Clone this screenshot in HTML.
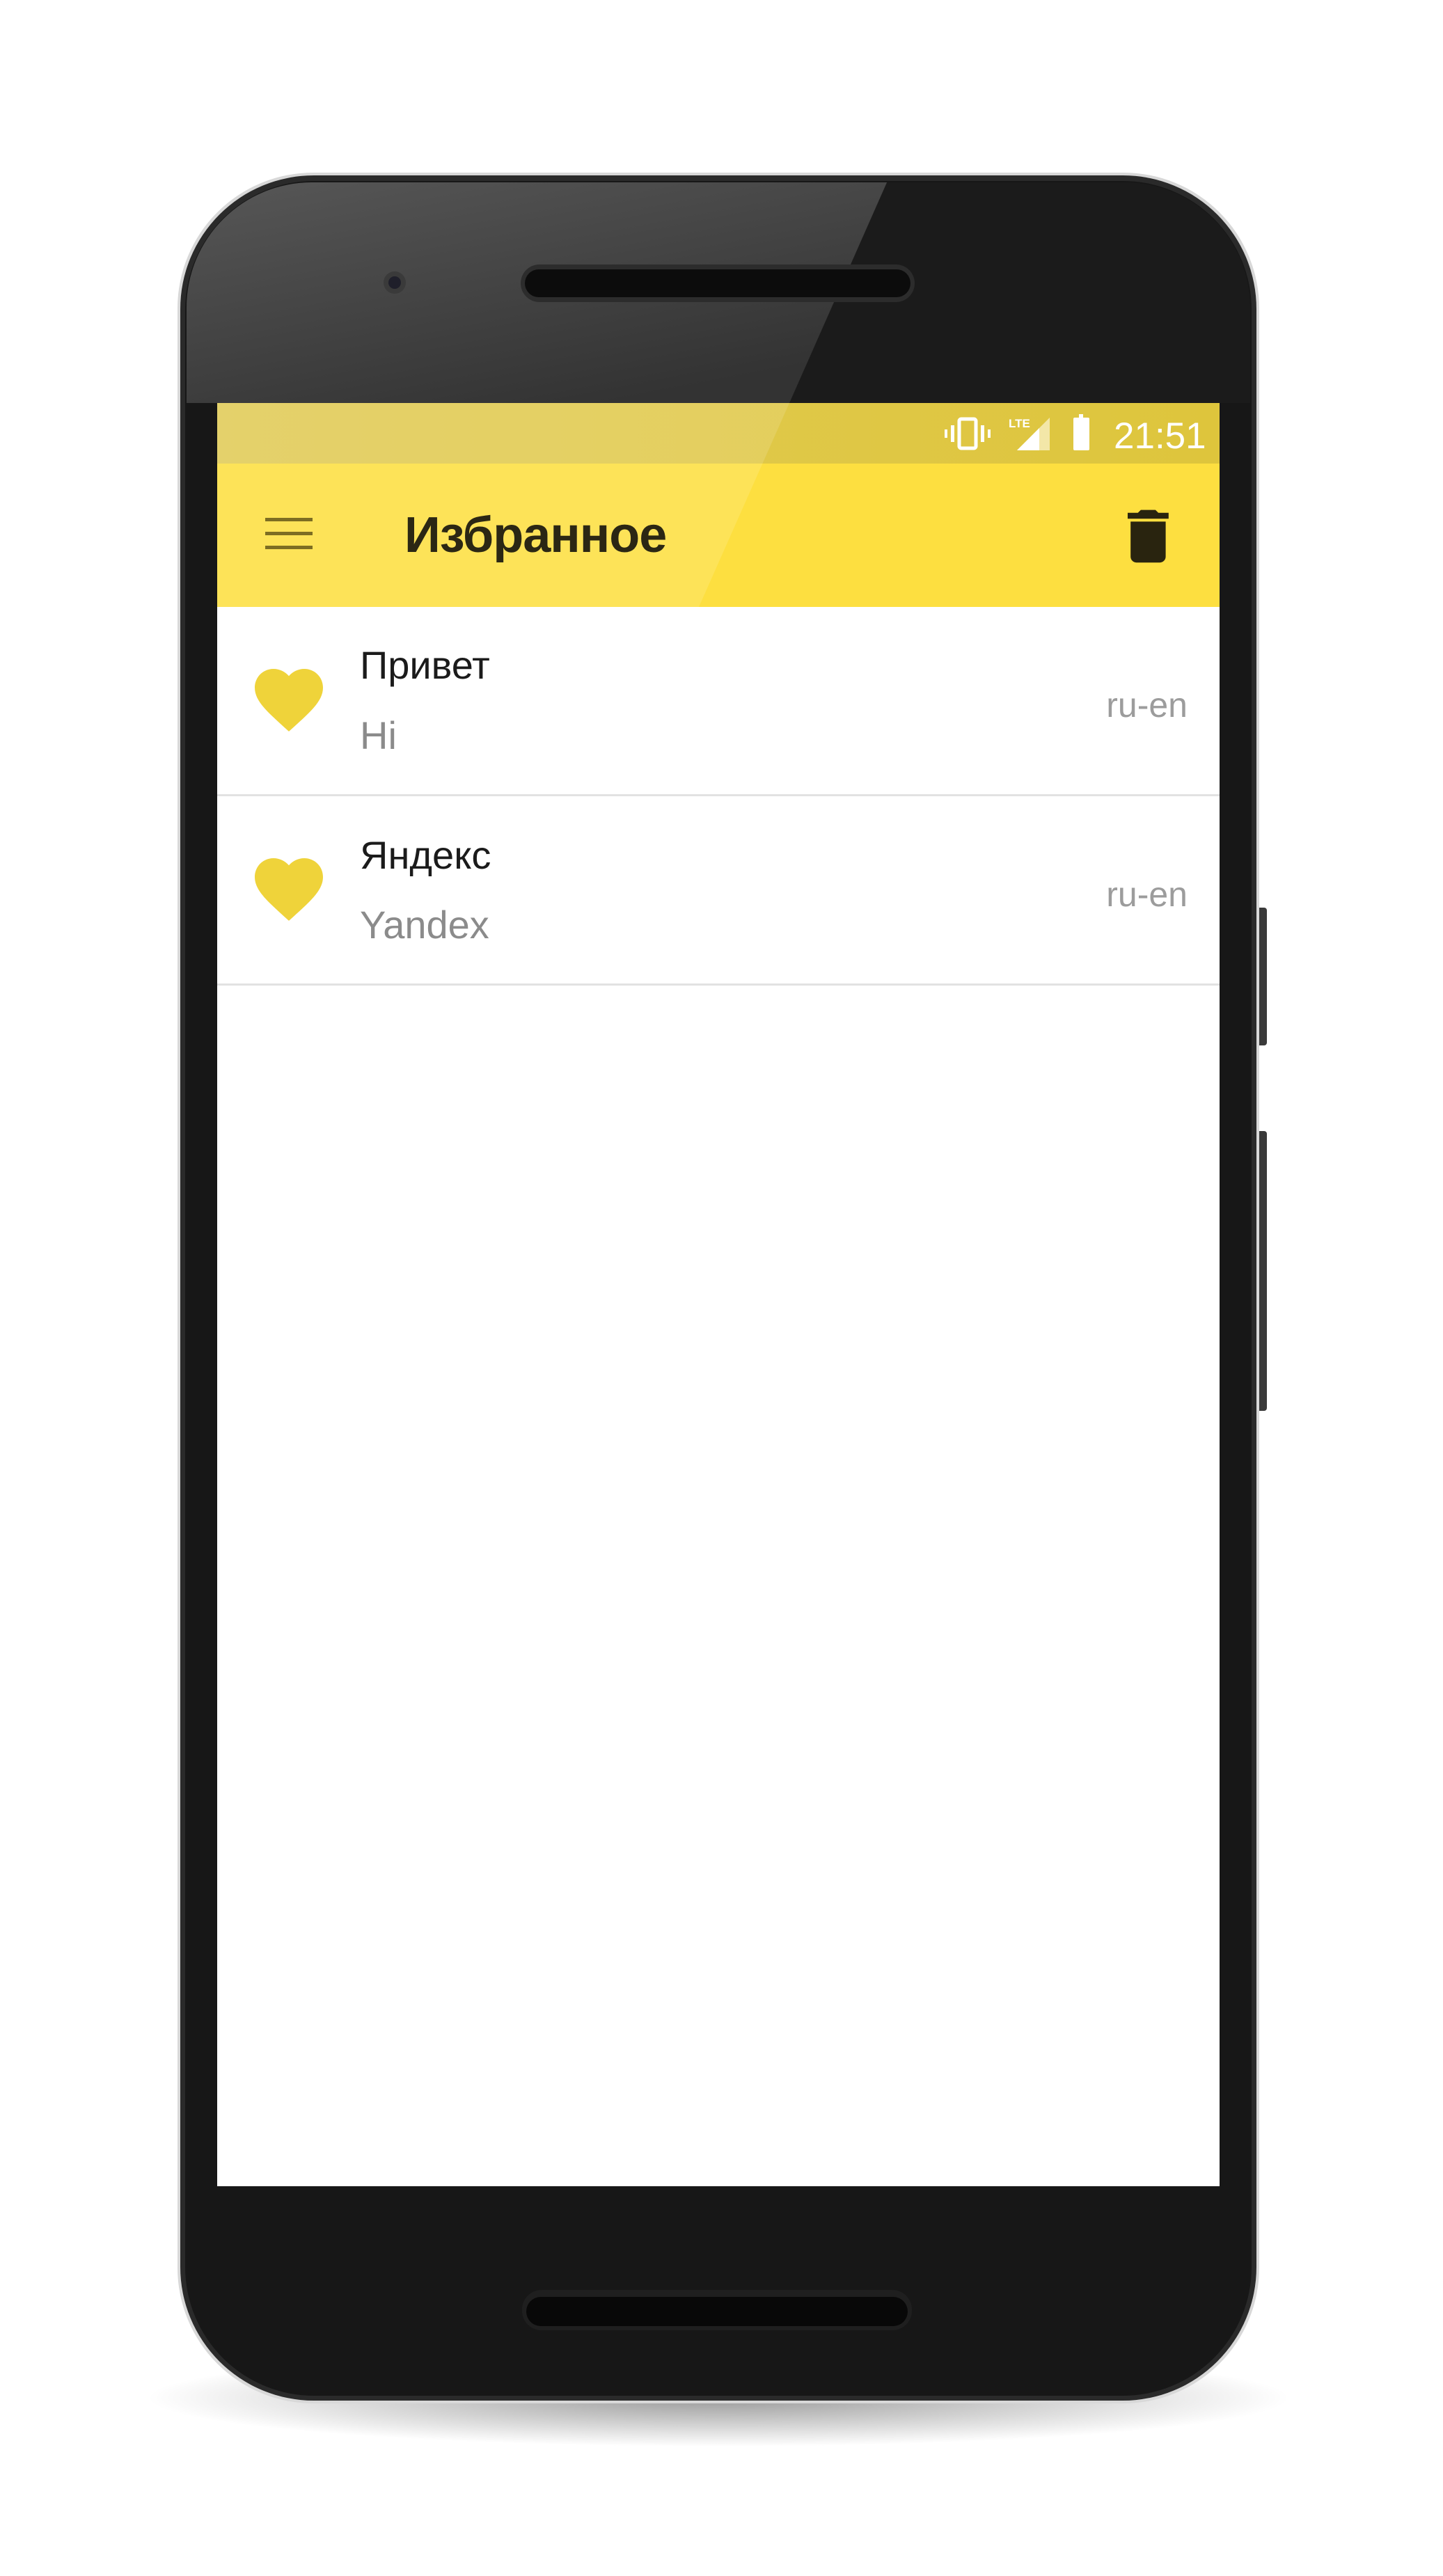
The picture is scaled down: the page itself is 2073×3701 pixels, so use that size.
<!DOCTYPE html>
<html><head><meta charset="utf-8"><style>
html,body{margin:0;padding:0;background:#fff;}
body{width:2073px;height:3701px;position:relative;overflow:hidden;font-family:"Liberation Sans","DejaVu Sans",sans-serif;}
.abs{position:absolute;}
.t{position:absolute;white-space:nowrap;line-height:1;}
</style></head><body>
<svg class="abs" style="left:0;top:0" width="2073" height="3701" viewBox="0 0 2073 3701">
<defs>
<radialGradient id="sh" cx="0.5" cy="0.5" r="0.5">
<stop offset="0" stop-color="#000" stop-opacity="0.4"/>
<stop offset="1" stop-color="#000" stop-opacity="0"/>
</radialGradient>
<linearGradient id="bez" x1="0" y1="0" x2="0.6" y2="1">
<stop offset="0" stop-color="#575757"/>
<stop offset="1" stop-color="#333"/>
</linearGradient>
<linearGradient id="sb" x1="0" y1="0" x2="1" y2="0">
<stop offset="0" stop-color="#e1cb55"/>
<stop offset="1" stop-color="#dec53c"/>
</linearGradient>
<clipPath id="face"><rect x="268" y="262" width="1528" height="3178" rx="180"/></clipPath>
</defs>
<ellipse cx="1032" cy="3445" rx="820" ry="70" fill="url(#sh)"/>
<rect x="1805" y="1304" width="15" height="198" rx="4" fill="#3a3a3a"/>
<rect x="1805" y="1625" width="15" height="402" rx="4" fill="#3a3a3a"/>
<rect x="255" y="248" width="1554" height="3205" rx="195" fill="#d8d8d8"/>
<rect x="259" y="252" width="1546" height="3197" rx="192" fill="#2a2a2a"/>
<rect x="266" y="260" width="1532" height="3182" rx="185" fill="#171717"/>
<g clip-path="url(#face)">
<rect x="266" y="260" width="1532" height="319" fill="#1b1b1b"/>
<polygon points="266,260 1275,260 1134,579 266,579" fill="url(#bez)"/>
</g>
<rect x="748" y="380" width="566" height="54" rx="27" fill="#2c2c2c"/>
<rect x="754" y="387" width="554" height="40" rx="20" fill="#0c0c0c"/>
<rect x="750" y="3290" width="560" height="58" rx="28" fill="#1f1f1f"/>
<rect x="756" y="3300" width="548" height="42" rx="21" fill="#080808"/>
<circle cx="567" cy="406" r="16" fill="#3a3a3a"/>
<circle cx="567" cy="406" r="9" fill="#1f1f2a"/>
<rect x="312" y="579" width="1440" height="2562" fill="#fff"/>
<rect x="312" y="579" width="1440" height="87" fill="url(#sb)"/>
<rect x="312" y="666" width="1440" height="206" fill="#fddf40"/>
<polygon points="312,579 1134,579 1004,872 312,872" fill="#fff" opacity="0.13"/>
<rect x="312" y="1141" width="1440" height="3" fill="#e2e2e2"/>
<rect x="312" y="1413" width="1440" height="3" fill="#e2e2e2"/>
<g fill="#7d6d22">
<rect x="381" y="744" width="68" height="5"/>
<rect x="381" y="764" width="68" height="5"/>
<rect x="381" y="784" width="68" height="5"/>
</g>
<g transform="translate(1599,720) scale(4.2)" fill="#29240f">
<path d="M6 19c0 1.1.9 2 2 2h8c1.1 0 2-.9 2-2V7H6v12zM19 4h-3.5l-1-1h-5l-1 1H5v2h14V4z"/>
</g>
<g fill="#efd33a">
<path transform="translate(366,961) scale(4.9,4.9) translate(-2,-3)" d="M12 21.35l-1.45-1.32C5.4 15.36 2 12.28 2 8.5 2 5.42 4.42 3 7.5 3c1.74 0 3.41.81 4.5 2.09C13.09 3.81 14.76 3 16.5 3 19.580 3 22 5.42 22 8.5c0 3.78-3.4 6.86-8.55 11.54L12 21.35z"/>
<path transform="translate(366,1233) scale(4.9,4.9) translate(-2,-3)" d="M12 21.35l-1.45-1.32C5.4 15.36 2 12.28 2 8.5 2 5.42 4.42 3 7.5 3c1.74 0 3.41.81 4.5 2.09C13.09 3.81 14.76 3 16.5 3 19.58 3 22 5.42 22 8.5c0 3.78-3.4 6.86-8.55 11.54L12 21.35z"/>
</g>
<g fill="#fff">
<rect x="1378" y="602" width="24" height="42" rx="3" fill="none" stroke="#fff" stroke-width="5"/>
<rect x="1366" y="611" width="5" height="24"/>
<rect x="1409" y="611" width="5" height="24"/>
<rect x="1357" y="617" width="4" height="12"/>
<rect x="1419" y="617" width="4" height="12"/>
<polygon points="1508,600 1508,647 1461,647" fill="#f3e7a8"/>
<polygon points="1493,615 1493,647 1461,647"/>
<text x="1449" y="614" font-size="17" font-weight="bold" font-family="Liberation Sans, sans-serif">LTE</text>
<rect x="1550" y="595" width="6" height="6"/>
<rect x="1542" y="600" width="23" height="47" rx="2"/>
</g>
</svg>
<div class="t" style="left:1600px;top:600px;font-size:53px;color:#fff;">21:51</div>
<div class="t" style="left:581px;top:733px;font-size:72px;font-weight:bold;color:#2b2714;letter-spacing:-1px;">Избранное</div>
<div class="t" style="left:517px;top:928px;font-size:56px;color:#1b1b1b;">Привет</div>
<div class="t" style="left:517px;top:1029px;font-size:56px;color:#8b8b8b;">Hi</div>
<div class="t" style="right:367px;top:988px;font-size:50px;color:#9c9c9c;">ru-en</div>
<div class="t" style="left:517px;top:1201px;font-size:56px;color:#1b1b1b;">Яндекс</div>
<div class="t" style="left:517px;top:1301px;font-size:56px;color:#8b8b8b;">Yandex</div>
<div class="t" style="right:367px;top:1260px;font-size:50px;color:#9c9c9c;">ru-en</div>
</body></html>
